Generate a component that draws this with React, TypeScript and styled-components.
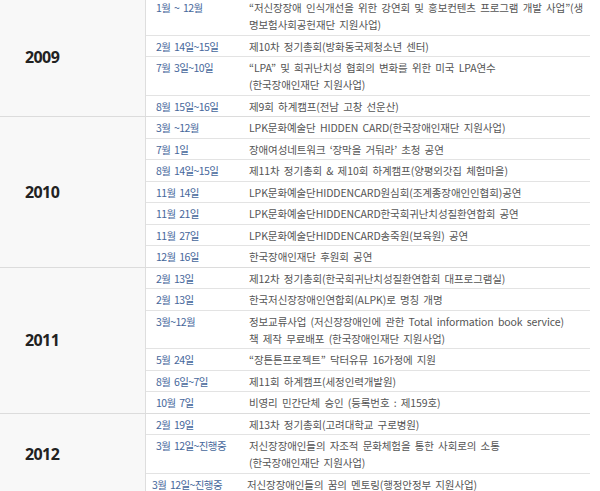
import React from 'react';
import styled, { createGlobalStyle } from 'styled-components';

const GlobalStyle = createGlobalStyle`
    body {
        margin: 0;
        background: #ffffff;
        font-family: "Noto Sans CJK KR", "Noto Sans", sans-serif;
    }
`;

type Item = { date: string; text: React.ReactNode; shifted?: boolean };
type Year = { year: string; items: Item[] };

const history: Year[] = [
    {
        year: '2009',
        items: [
            { date: '1월 ~ 12월', text: <>“저신장장애 인식개선을 위한 강연회 및 홍보컨텐츠 프로그램 개발 사업”(생<br />명보험사회공헌재단 지원사업)</> },
            { date: '2월 14일~15일', text: '제10차 정기총회(방화동국제청소년 센터)' },
            { date: '7월 3일~10일', text: <>“LPA” 및 희귀난치성 협회의 변화를 위한 미국 LPA연수<br />(한국장애인재단 지원사업)</> },
            { date: '8월 15일~16일', text: '제9회 하계캠프(전남 고창 선운산)' },
        ],
    },
    {
        year: '2010',
        items: [
            { date: '3월 ~12월', text: 'LPK문화예술단 HIDDEN CARD(한국장애인재단 지원사업)' },
            { date: '7월 1일', text: '장애여성네트워크 ‘장막을 거둬라’ 초청 공연' },
            { date: '8월 14일~15일', text: '제11차 정기총회 & 제10회 하계캠프(양평외갓집 체험마을)' },
            { date: '11월 14일', text: 'LPK문화예술단HIDDENCARD원심회(조계종장애인인협회)공연' },
            { date: '11월 21일', text: 'LPK문화예술단HIDDENCARD한국희귀난치성질환연합회 공연' },
            { date: '11월 27일', text: 'LPK문화예술단HIDDENCARD송죽원(보육원) 공연' },
            { date: '12월 16일', text: '한국장애인재단 후원회 공연' },
        ],
    },
    {
        year: '2011',
        items: [
            { date: '2월 13일', text: '제12차 정기총회(한국희귀난치성질환연합회 대프로그램실)' },
            { date: '2월 13일', text: '한국저신장장애인연합회(ALPK)로 명칭 개명' },
            { date: '3월~12월', text: <>정보교류사업 (저신장장애인에 관한 Total information book service)<br />책 제작 무료배포 (한국장애인재단 지원사업)</> },
            { date: '5월 24일', text: '“장튼튼프로젝트” 닥터유뮤 16가정에 지원' },
            { date: '8월 6일~7일', text: '제11회 하계캠프(세정인력개발원)' },
            { date: '10월 7일', text: '비영리 민간단체 승인 (등록번호 : 제159호)' },
        ],
    },
    {
        year: '2012',
        items: [
            { date: '2월 19일', text: '제13차 정기총회(고려대학교 구로병원)' },
            { date: '3월 12일~진행중', text: <>저신장장애인들의 자조적 문화체험을 통한 사회로의 소통<br />(한국장애인재단 지원사업)</> },
            { date: '3월 12일~진행중', text: '저신장장애인들의 꿈의 멘토링(행정안정부 지원사업)', shifted: true },
        ],
    },
];

export default function App() {
    return (
        <>
            <GlobalStyle />
            <Table>
                {history.map((group) => (
                    <YearGroup key={group.year}>
                        <YearCell>{group.year}</YearCell>
                        <Rows>
                            {group.items.map((item, i) => (
                                <Row key={i}>
                                    <DateCell $shifted={item.shifted}>{item.date}</DateCell>
                                    <TextCell $shifted={item.shifted}>{item.text}</TextCell>
                                </Row>
                            ))}
                        </Rows>
                    </YearGroup>
                ))}
            </Table>
        </>
    );
}

const Table = styled.div`
    width: 590px;
    margin-top: -3px;
    display: flex;
    flex-direction: column;
`;

const YearGroup = styled.section`
    display: grid;
    grid-template-columns: 146px 1fr;
    border-bottom: 1px solid #dcdcdc;
`;

const YearCell = styled.div`
    display: flex;
    align-items: center;
    padding-left: 25px;
    background: #f8f8f8;
    border-right: 1px solid #dedede;
    font-family: "Noto Sans", "Open Sans", sans-serif;
    font-size: 16px;
    font-weight: 700;
    letter-spacing: -0.6px;
    color: #222222;
`;

const Rows = styled.div`
    display: flex;
    flex-direction: column;
`;

const Row = styled.div`
    display: grid;
    grid-template-columns: 103px 1fr;
    padding: 2px 0 1.5px;
    font-size: 10.5px;
    line-height: 17px;

    & + & {
        border-top: 1px solid #e3e3e3;
    }
`;

const DateCell = styled.div<{ $shifted?: boolean }>`
    padding-left: ${(p) => (p.$shifted ? '6px' : '10px')};
    color: #46679b;
    letter-spacing: -0.6px;
    word-spacing: 2px;
    white-space: nowrap;
`;

const TextCell = styled.div<{ $shifted?: boolean }>`
    margin-left: ${(p) => (p.$shifted ? '-2px' : '0')};
    color: #555555;
    letter-spacing: -0.1px;
    word-spacing: 2px;
    white-space: nowrap;
`;
